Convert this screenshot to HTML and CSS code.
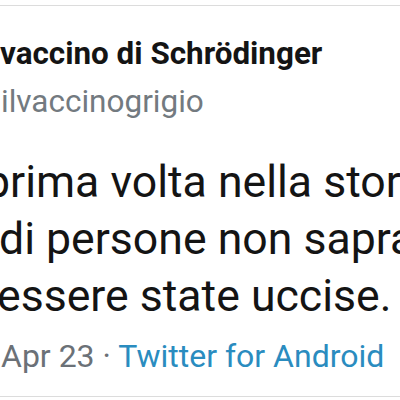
FILE: index.html
```html
<!DOCTYPE html>
<html lang="it">
<head>
<meta charset="utf-8">
<link rel="stylesheet" href="styles.css">
</head>
<body>
<div class="tweet">
  <div class="name">vaccino di Schrödinger</div>
  <div class="handle">ilvaccinogrigio</div>
  <div class="text">
    <div class="line l1">prima volta nella storia</div>
    <div class="line l2">di persone non sapranno</div>
    <div class="line l3">essere state uccise.</div>
  </div>
  <div class="meta"><span class="date">Apr 23 · </span><span class="source">Twitter for Android</span></div>
</div>
</body>
</html>
```
FILE: styles.css
```css
html, body {
  margin: 0;
  padding: 0;
  background: #ffffff;
}
body {
  width: 400px;
  height: 400px;
  overflow: hidden;
  font-family: Roboto, "Noto Sans", sans-serif;
}
.tweet {
  margin-top: 5px;
  border-top: 1px solid #dcdcdc;
  border-bottom: 1px solid #dcdcdc;
  padding: 30px 0 22px 0;
  white-space: nowrap;
  overflow: hidden;
}
.name {
  font-size: 31.4px;
  line-height: 36px;
  font-weight: 700;
  color: #141414;
}
.handle {
  margin-top: 12px;
  font-size: 31.5px;
  line-height: 36px;
  color: #737a80;
  text-indent: 1px;
}
.text {
  margin-top: 34px;
  font-size: 44.6px;
  line-height: 57px;
  color: #141414;
}
.l1 {
  text-indent: -15px;
}
.l2 {
  text-indent: -1px;
}
.l3 {
  text-indent: -3px;
}
.meta {
  margin-top: 13px;
  font-size: 32px;
  line-height: 36px;
  text-indent: 1px;
}
.date {
  color: #6b7177;
}
.source {
  color: #2a8cbf;
}
```
